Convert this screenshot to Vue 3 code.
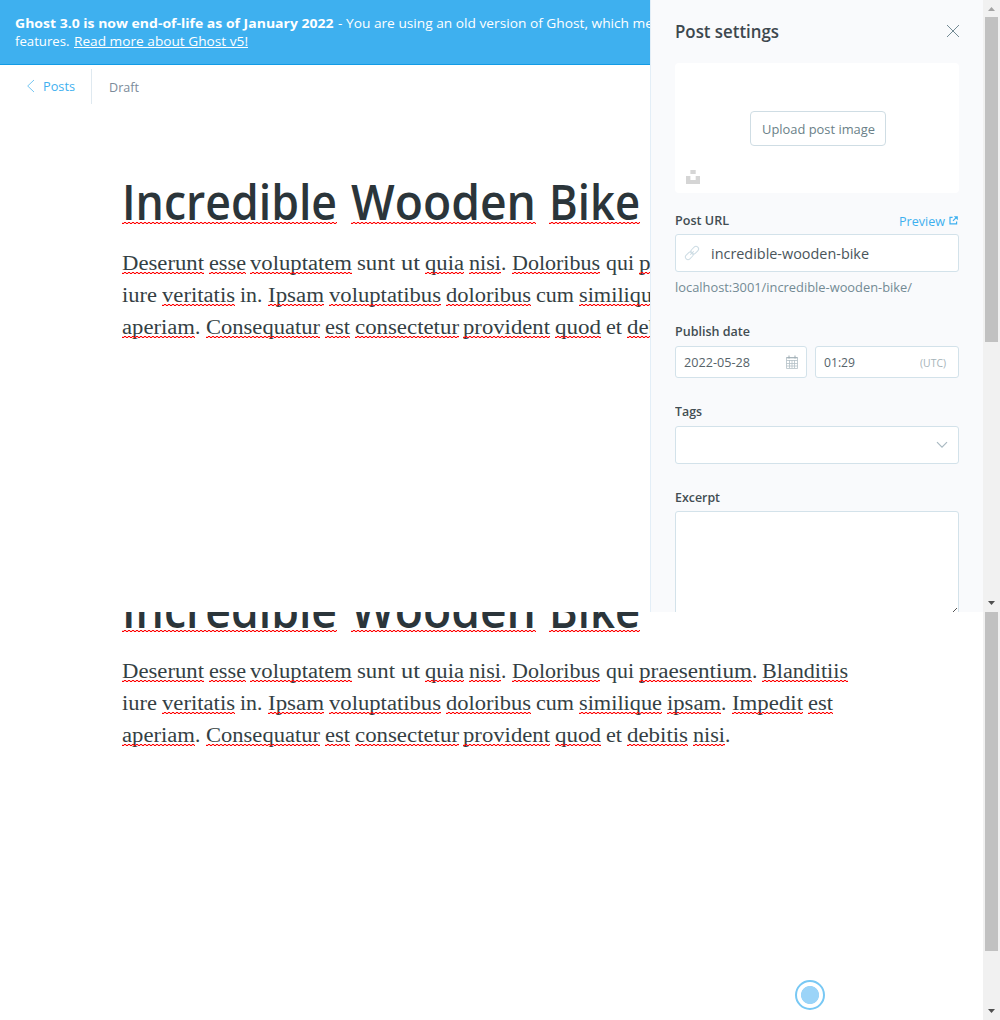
<script setup>
// [word, left edge, word width, flagged by the spell checker, trailing punctuation]
const lines = [
  [['Deserunt', 122, 82, 1], ['esse', 209, 37, 1], ['voluptatem', 250, 102, 1], ['sunt', 357, 38, 0], ['ut', 401, 19, 0], ['quia', 425, 39, 1], ['nisi', 469, 32, 1, '.'], ['Doloribus', 512, 88, 1], ['qui', 606, 28, 0], ['praesentium', 639, 113, 1, '.'], ['Blanditiis', 762, 86, 1]],
  [['iure', 122, 35, 0], ['veritatis', 162, 73, 1], ['in', 240, 17, 0, '.'], ['Ipsam', 268, 56, 1], ['voluptatibus', 329, 112, 1], ['doloribus', 446, 85, 1], ['cum', 536, 38, 0], ['similique', 579, 83, 1], ['ipsam', 667, 54, 1, '.'], ['Impedit', 732, 71, 1], ['est', 808, 25, 1]],
  [['aperiam', 122, 73, 1, '.'], ['Consequatur', 206, 114, 1], ['est', 325, 25, 1], ['consectetur', 355, 104, 1], ['provident', 463, 87, 1], ['quod', 555, 46, 1], ['et', 606, 16, 0], ['debitis', 627, 61, 1], ['nisi', 693, 32, 1, '.']],
]
const title = [['Incredible', 122, 215, 1], ['Wooden', 351, 185, 1], ['Bike', 549, 91, 1]]
const slot = (row, i) => ({ width: (i + 1 < row.length ? row[i + 1][1] - row[i][1] : row[i][2] + 8) + 'px' })

// Condenses or widens a run of text to a given width
const vFit = {
  mounted(el, { value }) {
    const w = el.getBoundingClientRect().width
    el.style.transform = `scaleX(${value / w})`
    el.style.marginRight = `${value - w}px`
  },
}
</script>

<template>
  <div class="screen">
    <section v-for="pane in 2" :key="pane" class="pane" :class="'pane-' + pane">
      <div class="page">
        <header class="notice">
          <div><b v-fit="318.5">Ghost 3.0 is now end-of-life as of January 2022</b><i></i><span v-fit="315">- You are using an old version of Ghost, which me</span></div>
          <div><span v-fit="54.5">features.</span><i></i><a v-fit="174">Read more about Ghost v5!</a></div>
        </header>
        <nav class="bar">
          <a class="back"><svg width="9" height="14" viewBox="0 0 9 14"><path d="M8 1 1.7 7 8 13" /></svg><span v-fit="32">Posts</span></a>
          <span class="status"><span v-fit="30">Draft</span></span>
        </nav>
        <h1 class="row">
          <span v-for="(t, i) in title" :key="i" class="slot" :style="slot(title, i)"><span v-fit="t[2]" class="word">{{ t[0] }}</span><em class="wave" :style="{ width: t[2] + 'px' }"></em></span>
        </h1>
        <p v-for="(line, n) in lines" :key="n" class="row">
          <span v-for="(t, i) in line" :key="i" class="slot" :style="slot(line, i)"><span v-fit="t[2]" class="word">{{ t[0] }}</span>{{ t[4] }}<em v-if="t[3]" class="wave" :style="{ width: t[2] + 'px' }"></em></span>
        </p>
      </div>

      <aside v-if="pane === 1" class="panel">
        <div class="head">
          <h2><span v-fit="104">Post settings</span></h2>
          <svg width="14" height="14" viewBox="0 0 14 14"><path d="m1 1 12 12M13 1 1 13" /></svg>
        </div>
        <div class="upload">
          <button><span v-fit="113">Upload post image</span></button>
          <svg class="unsplash" width="14" height="14" viewBox="0 0 14 14"><path d="M4.4 0h5.3v4H4.4zM0 6h4.4v4h5.3V6H14v8H0z" /></svg>
        </div>
        <div class="label url"><span v-fit="54">Post URL</span>
          <a><span v-fit="46">Preview</span><svg width="9" height="9" viewBox="0 0 9 9"><path d="M3.6 1.4H1v6.4h6.6V5.4" /><path d="M7.4 1.4 4 4.8" /><path class="tip" d="M4.8.2h4v4z" /></svg></a>
        </div>
        <div class="field slug">
          <svg width="14" height="14" viewBox="0 0 14 14"><g><rect x="-1.2" y="4.4" width="8.8" height="5.2" rx="2.6" /><rect x="6.4" y="4.4" width="8.8" height="5.2" rx="2.6" /><path d="M4.5 7h5" /></g></svg>
          <span v-fit="158">incredible-wooden-bike</span>
        </div>
        <div class="hint"><span v-fit="237">localhost:3001/incredible-wooden-bike/</span></div>
        <div class="label date-label"><span v-fit="75">Publish date</span></div>
        <div class="dates">
          <div class="field date"><span v-fit="66">2022-05-28</span>
            <svg width="12" height="14" viewBox="0 0 12 14"><path d="M.5 2.5h11v11H.5zM.5 5.5h11M.5 8.5h11M.5 11h11M3.5 5v8M6 5v8M8.5 5v8" /><path class="rings" d="M3 .5v3M9 .5v3M.5 2.8h11" /></svg></div>
          <div class="field time"><span v-fit="31">01:29</span><small><span v-fit="26">(UTC)</span></small></div>
        </div>
        <div class="label tags-label"><span v-fit="27">Tags</span></div>
        <div class="field tags"><svg width="12" height="8" viewBox="0 0 12 8"><path d="m1 1.2 5 5 5-5" /></svg></div>
        <div class="label excerpt-label"><span v-fit="45">Excerpt</span></div>
        <div class="field excerpt"><svg width="4" height="4" viewBox="0 0 4 4"><path d="M0 4 4 0" /></svg></div>
      </aside>

      <div class="scroll">
        <svg v-if="pane === 1" class="up" width="17" height="17"><path d="M5 11h7L8.5 7z" /></svg>
        <div class="thumb"></div>
        <svg class="down" width="17" height="17"><path d="M5 6h7L8.5 10z" /></svg>
      </div>
      <div v-if="pane === 2" class="beacon"></div>
    </section>
  </div>
</template>

<style>
body { margin: 0; overflow: hidden; }
</style>

<style scoped>
* { box-sizing: border-box; }
.screen { width: 1000px; height: 1020px; overflow: hidden; background: #fff; font-family: "Open Sans", "Noto Sans", sans-serif; font-size: 13px; color: #394047; }
span, b, a { white-space: nowrap; }
.notice b, .notice span, .notice a, .word, .back span, .status span, .panel span { display: inline-block; transform-origin: 0 50%; }
.pane { position: relative; display: flex; overflow: hidden; }
.pane-1 { height: 612px; }
.pane-2 { height: 408px; }
.page { width: 983px; flex: none; overflow: hidden; }
.pane-1 .page { width: 650px; }
.pane-2 .page { margin-top: -204px; }
.notice { height: 65px; padding: 14px 0 0 15px; background: #3eb0ef; border-bottom: 1px solid #139be5; color: #fff; line-height: 18px; font-size: 13px; }
.notice div { height: 18px; white-space: nowrap; }
.notice i { display: inline-block; width: 4.5px; }
.notice a { text-decoration: underline; }
.bar { height: 40px; display: flex; align-items: center; padding-left: 26px; }
.back { display: flex; align-items: center; height: 35px; width: 66px; margin-top: 2px; color: #3eb0ef; border-right: 1px solid #dfe9f0; }
.back svg { margin-right: 8px; fill: none; stroke: #75c7f3; }
.status { margin: 4px 0 0 17px; color: #7c8b9a; }
.row { display: flex; margin: 0 0 0 122px; height: 32px; font: 21.3px/32px "Liberation Serif", serif; color: #343f44; }
h1.row { height: 70px; margin-top: 67px; margin-bottom: 5px; font: 600 48px/60px "Open Sans", "Noto Sans", sans-serif; color: #2b353a; }
.slot { position: relative; flex: none; }
.wave { position: absolute; left: 0; top: 25px; height: 2px; background: conic-gradient(#f00 25%, #f003 0 50%, #f00 0 75%, #f003 0) 0 0 / 4px 2px; }
h1 .wave { top: 50px; }
.panel { flex: none; width: 333px; height: 612px; padding: 0 24px; background: #f9fafc; border-left: 1px solid #e3eef7; overflow: hidden; }
.head { height: 63px; display: flex; justify-content: space-between; align-items: center; }
.head svg { fill: none; stroke: #738a94; margin: 0 -1px 2px 0; }
h2 { margin: -2px 0 0; font-size: 18px; font-weight: 600; line-height: 24px; color: #3d484e; }
.upload { position: relative; height: 130px; width: 284px; background: #fff; border-radius: 4px; display: flex; justify-content: center; align-items: center; }
button { width: 136px; height: 35px; padding: 1px 0 0 10.5px; margin-left: 2px; text-align: left; border: 1px solid #cfdde4; border-radius: 4px; background: #fff; color: #6a7f88; font: inherit; }
.unsplash { position: absolute; left: 11px; bottom: 9px; fill: #d5d5d5; }
.label { line-height: 18px; height: 18px; font-weight: 600; color: #424d52; }
.url { display: flex; justify-content: space-between; margin-top: 18px; width: 284px; }
.url a { font-weight: 400; color: #3eb0ef; display: flex; align-items: center; padding: 2px 1px 0 0; }
.url svg { margin: 0 0 2px 4px; fill: none; stroke: #3eb0ef; stroke-width: 1.2; }
.url .tip { fill: #3eb0ef; stroke: none; }
.field { width: 284px; background: #fff; border: 1px solid #d3e2ea; border-radius: 3px; display: flex; align-items: center; }
.slug { height: 38px; margin-top: 5px; padding-left: 9px; font-size: 14.5px; color: #4a555b; }
.slug svg { margin-right: 12px; fill: none; stroke: #cddce4; overflow: visible; }
.slug g { transform: rotate(-45deg); transform-origin: 7px 7px; }
.hint { margin-top: 6px; line-height: 18px; color: #738a94; }
.date-label { margin-top: 26px; }
.dates { display: flex; gap: 8px; margin-top: 6px; }
.dates .field { height: 32px; padding: 0 8px; color: #56636a; justify-content: space-between; }
.dates .date { width: 132px; }
.dates .time { width: 144px; }
.date svg { fill: none; stroke: #b4c0c6; stroke-width: .8; }
.date .rings { stroke: #9fadb4; stroke-width: 1; }
.time small { font-size: 11px; color: #a6b3b9; margin-right: 4px; }
.tags-label { margin-top: 24px; }
.tags { height: 38px; margin-top: 6px; justify-content: flex-end; padding-right: 10px; }
.tags svg { fill: none; stroke: #a9b9c2; stroke-width: 1.2; }
.excerpt-label { margin-top: 24px; }
.excerpt { height: 110px; margin-top: 5px; padding: 0 1px 8px 0; align-items: flex-end; justify-content: flex-end; }
.excerpt svg { stroke: #555; fill: none; }
.scroll { width: 17px; flex: none; background: #f1f1f1; position: relative; display: flex; flex-direction: column; }
.up { fill: #a3a3a3; flex: none; }
.down { fill: #505050; margin-top: auto; }
.thumb { width: 13px; margin-left: 2px; background: #c1c1c1; height: 325px; }
.pane-2 .thumb { height: 339px; }
.beacon { position: absolute; left: 795px; top: 368px; width: 30px; height: 30px; border: 2px solid #78c8f4; border-radius: 50%; background: radial-gradient(circle, #9bd4f8 0 8.7px, #fff 9.4px); }
</style>
